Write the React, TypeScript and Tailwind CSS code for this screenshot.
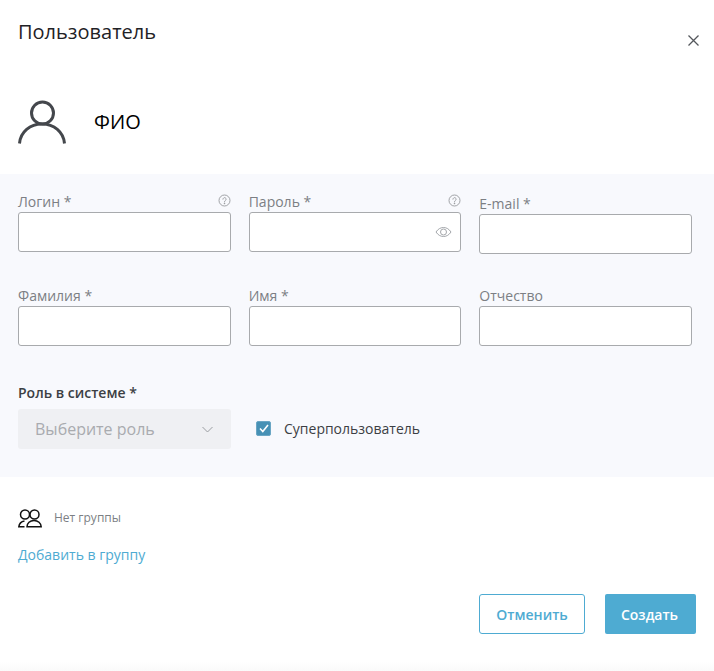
import React from "react";

function HelpIcon() {
  return (
    <svg width="13" height="13" viewBox="0 0 13 13" fill="none" stroke="#8a8d91" strokeWidth="0.8">
      <circle cx="6.5" cy="6.5" r="5.5" />
      <path d="M4.9 5.2a1.6 1.6 0 1 1 2.4 1.4c-.5.3-.8.6-.8 1.2" strokeLinecap="round" />
      <circle cx="6.5" cy="9.4" r="0.4" fill="#8a8d91" />
    </svg>
  );
}

function EyeIcon() {
  return (
    <svg width="17" height="12" viewBox="0 0 17 12" fill="none" stroke="#9a9da1" strokeWidth="0.9">
      <path d="M1 6c2-3 4.500-4.500 7.500-4.500S14 3 16 6c-2 3-4.500 4.500-7.500 4.500S3 9 1 6Z" />
      <circle cx="8.500" cy="6" r="3" />
    </svg>
  );
}

type FieldProps = {
  label: string;
  help?: boolean;
  eye?: boolean;
};

function Field({ label, help, eye }: FieldProps) {
  return (
    <div>
      <div className="flex h-[20px] items-center justify-between text-[14px] leading-[20px] text-[#7c7f84]">
        <span>{label}</span>
        {help && (
          <span className="-mt-[4px]">
            <HelpIcon />
          </span>
        )}
      </div>
      <div className="relative h-[40px] rounded-[3px] border border-[#a8aaad] bg-white">
        {eye && (
          <span className="absolute right-[8px] top-[13px] flex">
            <EyeIcon />
          </span>
        )}
      </div>
    </div>
  );
}

export default function App() {
  return (
    <div className="flex h-[671px] w-[714px] flex-col overflow-hidden bg-white font-['Open_Sans',sans-serif] text-[#2b2e33]">
      <div className="flex h-[174px] flex-col px-[18px]">
        <div className="flex justify-between pt-[18px]">
          <h1 className="text-[20px] leading-[28px] text-[#1f2226]">Пользователь</h1>
          <svg className="mr-[-3px] mt-[17px]" width="11" height="11" viewBox="0 0 11 11" stroke="#54575c" strokeWidth="1.3">
            <path d="M.5.500l10 10M10.500.500l-10 10" />
          </svg>
        </div>
        <div className="mt-[54px] flex items-center gap-[28px]">
          <svg width="48" height="44" viewBox="0 0 48 44" fill="none" stroke="#44474c" strokeWidth="3">
            <circle cx="24.500" cy="13" r="11" />
            <path d="M1.500 43.500C2.500 32 12 24 24 24s21.500 8 22.500 19.500" />
          </svg>
          <span className="text-[20px] font-medium leading-[24px] text-black">ФИО</span>
        </div>
      </div>

      <div className="h-[303px] bg-[#f8f9fd] px-[18px] pt-[18px]">
        <div className="grid w-[674px] grid-cols-3 gap-x-[18px]">
          <Field label="Логин *" help />
          <Field label="Пароль *" help eye />
          <div className="pt-[2px]">
            <Field label="E-mail *" />
          </div>
        </div>
        <div className="mt-[32px] grid w-[674px] grid-cols-3 gap-x-[18px]">
          <Field label="Фамилия *" />
          <Field label="Имя *" />
          <Field label="Отчество" />
        </div>
        <div className="mt-[37px] text-[14px] font-semibold leading-[20px] text-[#3c3f44]">Роль в системе *</div>
        <div className="mt-[6px] flex items-center">
          <div className="flex h-[40px] w-[213px] items-center justify-between rounded-[3px] bg-[#eff0f3] px-[17px] text-[16px] text-[#a9abaf]">
            <span>Выберите роль</span>
            <svg className="-mr-[-1px]" width="11" height="7" viewBox="0 0 11 7" fill="none" stroke="#9a9da1" strokeWidth="1">
              <path d="M.5 1l5 5 5-5" />
            </svg>
          </div>
          <div className="mb-[2px] ml-[25px] flex h-[15px] w-[15px] items-center justify-center rounded-[2px] border border-[#6aa6c4] bg-[#4791b5]">
            <svg width="10" height="9" viewBox="0 0 10 9" fill="none" stroke="#fff" strokeWidth="1.600">
              <path d="M1 4.500l2.800 3L9 1" />
            </svg>
          </div>
          <span className="mb-[2px] ml-[13px] text-[14px] text-[#3c3f44]">Суперпользователь</span>
        </div>
      </div>

      <div className="px-[18px]">
        <div className="mt-[32px] flex items-center gap-[12px]">
          <svg width="24" height="19" viewBox="0 0 24 19" fill="none" stroke="#111" strokeWidth="1.500">
            <circle cx="7" cy="5.500" r="4.500" />
            <circle cx="16.500" cy="5.500" r="4.500" />
            <path d="M6.500 12C3.500 12.500 1.200 14.500.8 17.800h5.700" />
            <path d="M9 17.800c0-3.600 3-6.300 7-6.300s7 2.700 7.200 6.300Z" />
          </svg>
          <span className="-mt-[1px] text-[12px] leading-[18px] text-[#7c7f84]">Нет группы</span>
        </div>
        <div className="mt-[17px] text-[14px] leading-[20px] text-[#4eabd2]">Добавить в группу</div>
        <div className="mt-[29px] flex justify-end gap-[20px]">
          <button className="h-[40px] w-[106px] rounded-[3px] border border-[#4eabd2] bg-white text-[14px] font-semibold text-[#4eabd2]">
            Отменить
          </button>
          <button className="h-[40px] w-[91px] rounded-[2px] bg-[#4eabd2] pr-[2px] text-[14px] font-semibold text-white">
            Создать
          </button>
        </div>
      </div>
      <div className="mt-auto h-[10px] bg-gradient-to-b from-white to-[#fafafa]" />
    </div>
  );
}
